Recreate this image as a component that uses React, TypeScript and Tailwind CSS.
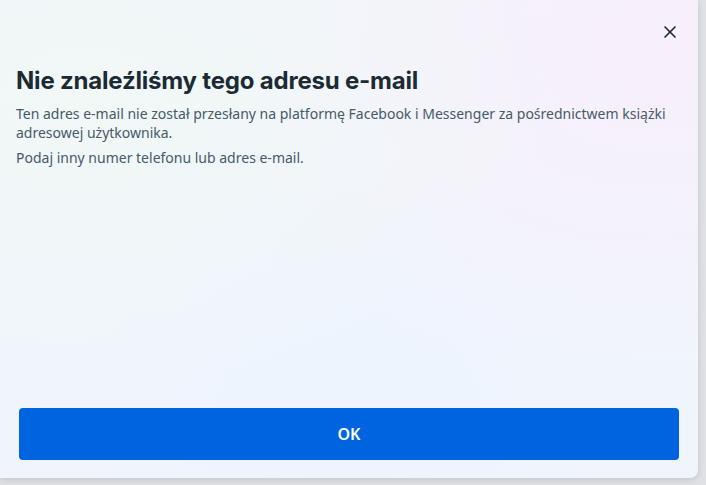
import { X } from "lucide-react";

export default function App() {
  return (
    <div className="h-[485px] w-[706px] overflow-hidden bg-[#dfe1e5]">
      <div className="relative flex h-[478px] w-[698px] flex-col overflow-hidden rounded-br-lg bg-[#f0f5fc] shadow-[0_2px_6px_rgba(0,0,0,0.12)]">
        <div className="pointer-events-none absolute inset-0 bg-[radial-gradient(ellipse_at_12%_20%,#f1f8f6_0%,transparent_55%),radial-gradient(ellipse_at_95%_10%,#f8effb_0%,transparent_55%),radial-gradient(ellipse_at_50%_100%,#edf4fe_0%,transparent_60%)]" />
        <div className="relative flex justify-end pr-[18px] pt-[22px]">
          <button className="flex h-5 w-5 items-center justify-center text-[#1c2b33]">
            <X size={22} strokeWidth={2} />
          </button>
        </div>
        <div className="relative flex flex-1 flex-col px-4 pt-[24px]">
          <h1 className="font-['Inter',sans-serif] text-[24px] font-bold leading-[30px] tracking-[-0.2px] text-[#1c2b33]">
            Nie znaleźliśmy tego adresu e-mail
          </h1>
          <p className="mt-[8px] font-['Noto_Sans',sans-serif] text-[14px] leading-[19px] text-[#465a69]">
            Ten adres e-mail nie został przesłany na platformę Facebook i Messenger za pośrednictwem książki adresowej użytkownika.
          </p>
          <p className="mt-[6px] font-['Noto_Sans',sans-serif] text-[14px] leading-[19px] text-[#465a69]">
            Podaj inny numer telefonu lub adres e-mail.
          </p>
        </div>
        <div className="relative px-[19px] pb-[18px]">
          <button className="flex h-[52px] w-full items-center justify-center rounded-[4px] bg-[#0064e0] font-['Noto_Sans',sans-serif] text-[16px] font-semibold text-white">
            OK
          </button>
        </div>
      </div>
    </div>
  );
}
